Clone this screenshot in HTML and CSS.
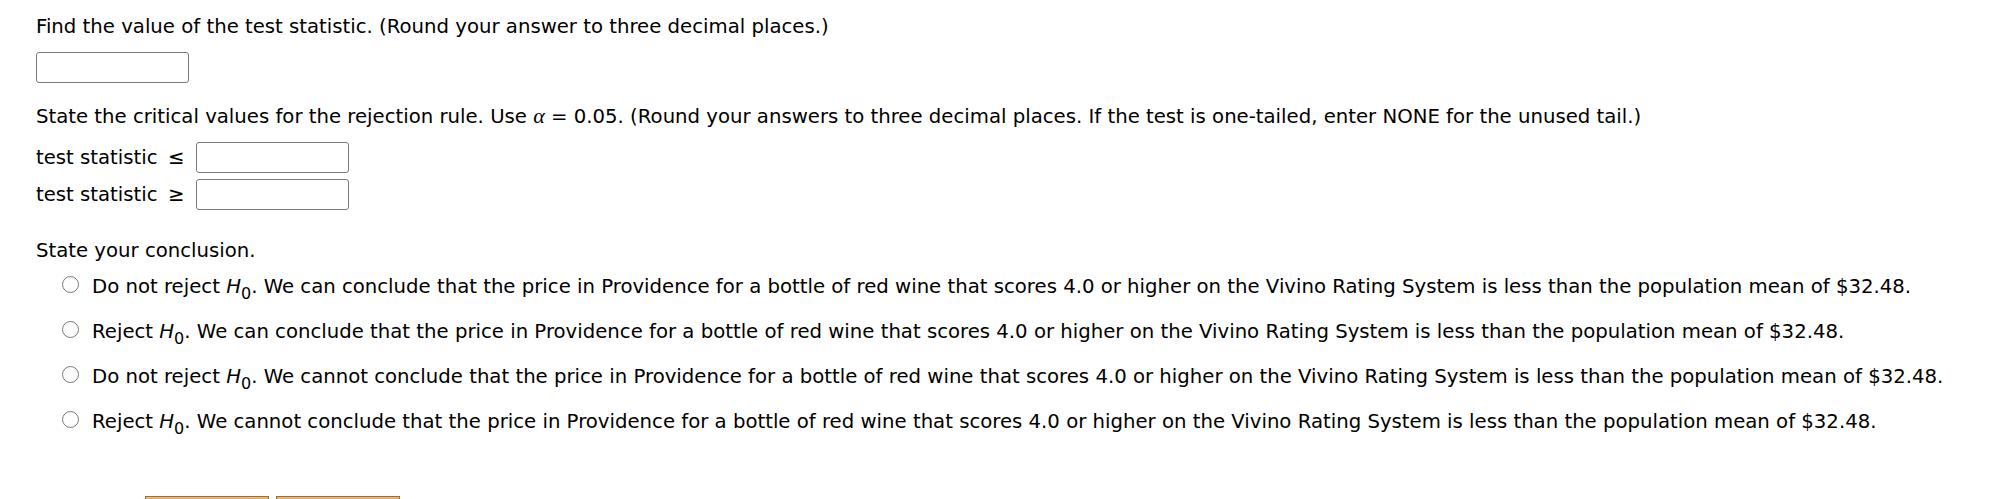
FILE: index.html
```html
<!DOCTYPE html>
<html>
<head>
<meta charset="utf-8">
<link rel="stylesheet" href="styles.css">
</head>
<body>
<div class="page">
  <p class="q q1">Find the value of the test statistic. (Round your answer to three decimal places.)</p>
  <div class="box wide"></div>

  <p class="q q2">State the critical values for the rejection rule. Use <i class="alpha">α</i> = 0.05. (Round your answers to three decimal places. If the test is one-tailed, enter NONE for the unused tail.)</p>
  <div class="crit">
    <div class="crow"><span class="clabel">test statistic</span><span class="sym">≤</span><div class="box"></div></div>
    <div class="crow"><span class="clabel">test statistic</span><span class="sym">≥</span><div class="box"></div></div>
  </div>

  <p class="q q3">State your conclusion.</p>
  <div class="opts">
    <div class="opt"><span class="radio"></span><span class="otext">Do not reject <i class="h">H</i><sub class="sub">0</sub>. We can conclude that the price in Providence for a bottle of red wine that scores 4.0 or higher on the Vivino Rating System is less than the population mean of $32.48.</span></div>
    <div class="opt"><span class="radio"></span><span class="otext">Reject <i class="h">H</i><sub class="sub">0</sub>. We can conclude that the price in Providence for a bottle of red wine that scores 4.0 or higher on the Vivino Rating System is less than the population mean of $32.48.</span></div>
    <div class="opt"><span class="radio"></span><span class="otext">Do not reject <i class="h">H</i><sub class="sub">0</sub>. We cannot conclude that the price in Providence for a bottle of red wine that scores 4.0 or higher on the Vivino Rating System is less than the population mean of $32.48.</span></div>
    <div class="opt"><span class="radio"></span><span class="otext">Reject <i class="h">H</i><sub class="sub">0</sub>. We cannot conclude that the price in Providence for a bottle of red wine that scores 4.0 or higher on the Vivino Rating System is less than the population mean of $32.48.</span></div>
  </div>

  <div class="buttons">
    <div class="btn"></div>
    <div class="btn"></div>
  </div>
</div>
</body>
</html>
```
FILE: styles.css
```css
html, body {
  margin: 0;
  padding: 0;
  overflow: hidden;
  background: #ffffff;
}
.page {
  height: 499px;
  box-sizing: border-box;
  overflow: hidden;
  padding: 15px 0 0 36px;
  font-family: "DejaVu Sans", sans-serif;
  font-size: 19.7px;
  line-height: 24px;
  color: #000000;
}
.q {
  margin: 0;
  white-space: nowrap;
}
.box {
  width: 151px;
  height: 29px;
  border: 1px solid #7a7a7a;
  border-radius: 3px;
  background: #fff;
  box-sizing: content-box;
}
.wide {
  margin-top: 13px;
}
.q2 {
  margin-top: 21px;
}
.alpha {
  font-family: "Liberation Serif", "DejaVu Serif", serif;
  font-size: 22px;
}
.crit {
  margin-top: 13px;
  display: flex;
  flex-direction: column;
  gap: 6px;
}
.crow {
  display: flex;
  align-items: center;
  height: 31px;
}
.clabel {
  width: 132px;
}
.sym {
  width: 28px;
}
.q3 {
  margin-top: 29px;
}
.opts {
  margin-top: 12px;
  display: flex;
  flex-direction: column;
  gap: 21px;
  padding-left: 26px;
}
.opt {
  display: flex;
  align-items: center;
  white-space: nowrap;
  height: 24px;
}
.radio {
  width: 15px;
  height: 15px;
  border: 1px solid #777;
  border-radius: 50%;
  background: #fff;
  margin-right: 13px;
  flex: none;
  position: relative;
  top: -3px;
}
.otext {
  line-height: 24px;
}
.h {
  font-style: italic;
}
.sub {
  font-size: 16px;
  line-height: 0;
  vertical-align: -6px;
}
.buttons {
  margin-top: 62px;
  margin-left: 109px;
  display: flex;
  gap: 7px;
}
.btn {
  width: 122px;
  height: 30px;
  border: 1px solid #a86a2c;
  border-bottom: none;
  background: linear-gradient(#d9a868, #c98e4c);
  box-shadow: inset 0 1px 0 #e9c08a;
}
```
